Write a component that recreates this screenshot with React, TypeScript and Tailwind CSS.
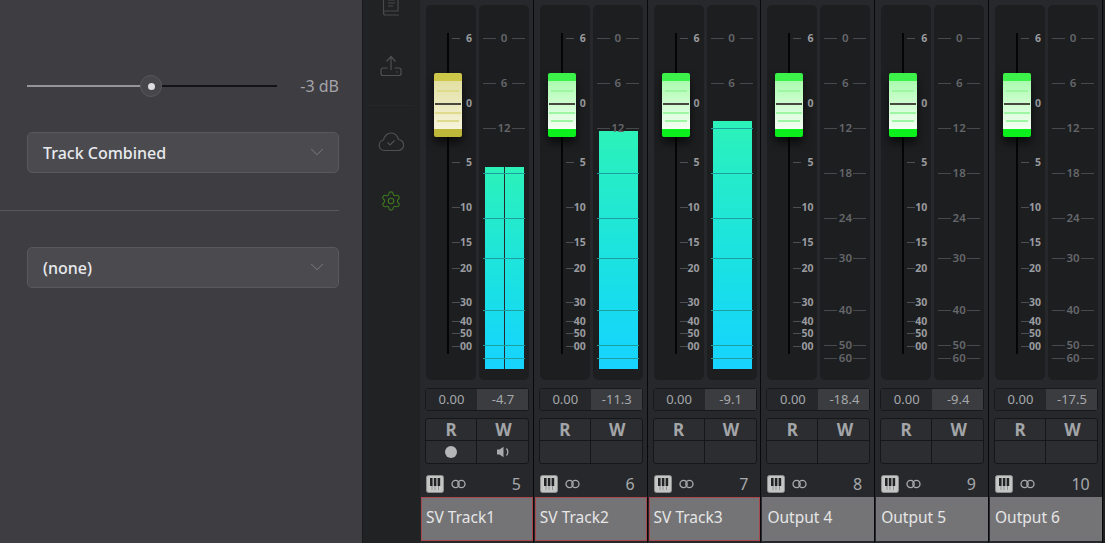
import { ChevronDown, Settings } from 'lucide-react';

const faderScale = [
  { label: '6', y: 38 },
  { label: '0', y: 103, noTick: true },
  { label: '5', y: 162 },
  { label: '10', y: 207 },
  { label: '15', y: 242 },
  { label: '20', y: 268 },
  { label: '30', y: 302 },
  { label: '40', y: 321 },
  { label: '50', y: 333 },
  { label: '00', y: 346 },
];

const meterScale = [
  { label: '0', y: 38 },
  { label: '6', y: 83 },
  { label: '12', y: 128 },
  { label: '18', y: 173 },
  { label: '24', y: 218 },
  { label: '30', y: 258 },
  { label: '40', y: 310 },
  { label: '50', y: 345 },
  { label: '60', y: 358 },
];

const tracks = [
  { name: 'SV Track1', num: 5, peak: '-4.7', level: 167, yellow: true, split: true, armed: true, red: true },
  { name: 'SV Track2', num: 6, peak: '-11.3', level: 131, red: true },
  { name: 'SV Track3', num: 7, peak: '-9.1', level: 121, red: true },
  { name: 'Output 4', num: 8, peak: '-18.4' },
  { name: 'Output 5', num: 9, peak: '-9.4' },
  { name: 'Output 6', num: 10, peak: '-17.5' },
];

function Select({ label }: { label: string }) {
  return (
    <div className="flex h-[41px] w-[312px] items-center justify-between rounded-[5px] border border-[#59585c] bg-[#4b4a4e] pl-[15px] pr-[10px]">
      <span className="text-[16px] font-medium text-[#e8eaee]">{label}</span>
      <ChevronDown size={22} strokeWidth={0.9} className="mb-[2px] text-[#85848a]" />
    </div>
  );
}

function FaderCap({ yellow }: { yellow?: boolean }) {
  const band = yellow ? 'bg-[#cdc74a]' : 'bg-[#3cf24a]';
  const bandLow = yellow ? 'bg-[#bdb73a]' : 'bg-[#0cf01e]';
  const body = yellow ? 'bg-linear-to-b from-[#e2e0a2] to-[#f6f4da]' : 'bg-linear-to-b from-[#aafbae] to-[#f4fff4]';
  const line = yellow ? 'bg-[#dedb8c]' : 'bg-[#9cf6a2]';
  return (
    <div className="absolute left-[8px] top-[68px] flex h-[64px] w-[28px] flex-col overflow-hidden rounded-[2px] shadow-[0_6px_8px_rgba(0,0,0,0.6)]">
      <div className={`h-[8px] ${band}`} />
      <div className={`relative flex-1 ${body}`}>
        <div className={`absolute inset-x-[3px] top-[9px] h-[2px] ${line}`} />
        <div className="absolute inset-x-[1px] top-[22px] h-[2px] bg-[#48483f]" />
        <div className={`absolute inset-x-[1px] top-[31px] h-[2px] ${line}`} />
        <div className={`absolute inset-x-[3px] top-[39px] h-[2px] ${line}`} />
      </div>
      <div className={`h-[8px] ${bandLow}`} />
    </div>
  );
}

function Strip({ track }: { track: (typeof tracks)[number] }) {
  return (
    <div className="flex h-full w-[113.8px] shrink-0 flex-col border-r border-[#08090a] bg-[#26282b]">
      <div className="flex h-[380px] shrink-0 gap-[3px] pl-[6px] pt-[5px]">
        {/* fader */}
        <div className="relative h-full w-[50px] rounded-[5px] bg-[#1d1e20]">
          <div className="absolute left-[21px] top-[28px] h-[321px] w-[2px] bg-[#050505]" />
          {faderScale.map((s) => (
            <div key={s.label} className="absolute left-[26px] flex w-[20px] items-center justify-between" style={{ top: s.y - 12 }}>
              {!s.noTick && <div className="h-[1px] w-[8px] shrink-0 bg-[#4d4f52]" />}
              <span className="ml-auto text-[10.5px] font-bold leading-[14px] text-[#999b9f]">{s.label}</span>
            </div>
          ))}
          <FaderCap yellow={track.yellow} />
        </div>
        {/* meter */}
        <div className="relative h-full w-[50px] rounded-[5px] bg-[#1d1e20]">
          {track.level && (
            <div
              className="absolute left-[6px] w-[39px] bg-linear-to-b from-[#2cf2b9] to-[#17d3ff]"
              style={{ top: track.level - 5, height: 369 - track.level }}
            />
          )}
          {track.split && <div className="absolute left-[25px] top-[162px] h-[202px] w-[1px] bg-[#26282b]" />}
          {meterScale.map((s) => {
            const covered = track.level ? s.y > track.level : false;
            return (
              <div key={s.label} className="absolute inset-x-[4px] flex h-[14px] items-center justify-between" style={{ top: s.y - 12 }}>
                <div className={`h-[1px] w-[13px] ${covered ? 'bg-[#1f9ea0]' : 'bg-[#47494c]'}`} />
                {!covered && <span className="text-[11.5px] font-semibold leading-[14px] text-[#65676b]">{s.label}</span>}
                {covered && <div className="h-[1px] flex-1 bg-[#1f9ea0]" />}
                <div className={`h-[1px] w-[13px] ${covered ? 'bg-[#1f9ea0]' : 'bg-[#47494c]'}`} />
              </div>
            );
          })}
        </div>
      </div>

      {/* values */}
      <div className="ml-[5px] mt-[8px] flex h-[23px] w-[104px] shrink-0 rounded-[3px] border border-[#17181a] text-[13px] text-[#a6a8ab]">
        <div className="flex w-[51px] items-center justify-center bg-[#25272a]">0.00</div>
        <div className="flex flex-1 items-center justify-center bg-[#3a3c3f] pl-[1px]">{track.peak}</div>
      </div>

      {/* read / write */}
      <div className="ml-[5px] mt-[7px] grid h-[46px] w-[104px] shrink-0 grid-cols-[51px_1fr] grid-rows-[22px_1fr] rounded-[3px] border border-[#151618] bg-[#2b2d30] text-[17px] font-bold text-[#a3a5a8]">
        <div className="flex items-center justify-center border-b border-r border-[#151618]">R</div>
        <div className="flex items-center justify-center border-b border-[#151618] pl-[2px]">W</div>
        <div className="flex items-center justify-center border-r border-[#151618]">
          {track.armed && <div className="size-[12px] rounded-full bg-[#b4b6b8]" />}
        </div>
        <div className="flex items-center justify-center">
          {track.armed && (
            <svg width="14" height="12" viewBox="0 0 14 12" fill="none">
              <path d="M1 3.500h2.500L7.500 .8v10.400L3.500 8.500H1z" fill="#a8aaad" />
              <path d="M10.500 2.500c1.500 2 1.500 5 0 7" stroke="#a8aaad" strokeWidth="1.300" />
            </svg>
          )}
        </div>
      </div>

      {/* icons + number */}
      <div className="ml-[6px] mt-[11px] flex h-[18px] shrink-0 items-center pr-[12px]">
        <svg width="18" height="18" viewBox="0 0 18 18">
          <rect x="0.5" y="0.5" width="17" height="17" rx="2" fill="#c4c4c4" stroke="#8e8e8e" />
          <path d="M2.800 3h12.400v12H2.800z" fill="#c9c9c9" />
          <path d="M4 3h2.600v8H4zM7.800 3h2.600v8H7.800zM11.600 3h2.600v8h-2.600z" fill="#222325" />
          <path d="M6 11v4M9 11v4M12.500 11v4" stroke="#77787a" strokeWidth="0.7" />
        </svg>
        <svg width="15" height="10" viewBox="0 0 15 10" fill="none" className="ml-[7px]">
          <circle cx="4.600" cy="5" r="3.600" stroke="#a8aaac" strokeWidth="1.300" />
          <circle cx="10.400" cy="5" r="3.600" stroke="#a8aaac" strokeWidth="1.300" />
        </svg>
        <span className="ml-auto text-[16px] leading-none text-[#a6a8ab]">{track.num}</span>
      </div>

      {/* name */}
      <div
        className={`ml-[1px] mt-[4px] flex h-[44px] shrink-0 items-center border pb-[2px] pl-[4px] text-[15.5px] text-[#e6e6e6] ${
          track.red ? 'border-[#a8474d] bg-[#747476]' : 'border-[#747476] bg-[#747476]'
        }`}
      >
        {track.name}
      </div>
    </div>
  );
}

export default function App() {
  return (
    <div className="flex h-[543px] w-[1105px] overflow-hidden bg-[#1f2022] font-['Noto_Sans',sans-serif]">
      {/* settings panel */}
      <div className="w-[362px] shrink-0 bg-[#3e3d42] pt-[76px]">
        <div className="ml-[27px] flex h-[20px] w-[312px] items-center justify-between">
          <div className="relative flex h-[2px] w-[250px]">
            <div className="w-[124px] bg-[#96959b]" />
            <div className="flex-1 bg-[#141416]" />
            <div className="absolute left-[113px] top-[-10px] flex size-[22px] items-center justify-center rounded-full border border-[#58575c] bg-[#47464b]">
              <div className="size-[7px] rounded-full bg-[#dcdce2]" />
            </div>
          </div>
          <span className="text-[16px] text-[#a4a4aa]">-3 dB</span>
        </div>
        <div className="ml-[27px] mt-[36px]">
          <Select label="Track Combined" />
        </div>
        <div className="mt-[37px] h-[1px] w-[339px] bg-[#58575c]" />
        <div className="ml-[27px] mt-[36px]">
          <Select label="(none)" />
        </div>
      </div>

      {/* icon rail */}
      <div className="flex w-[58px] shrink-0 flex-col border-l border-[#1a1a1c] bg-[#212224]">
        <div className="mr-[2px] flex flex-col items-center">
          <svg width="18" height="21" viewBox="0 0 18 21" fill="none" stroke="#48494b" strokeWidth="1.200" className="mt-[-5px]">
            <path d="M3 1h13v15H3.500A2 2 0 0 0 1.500 18v-15A2 2 0 0 1 3 1z" />
            <path d="M1.500 18a2 2 0 0 0 2 2H17M6 5h7M6 8h7M6 11h5" />
          </svg>
          <svg width="22" height="22" viewBox="0 0 22 22" fill="none" stroke="#4f5052" strokeWidth="1.200" className="mt-[39px]">
            <path d="M11 15V2M6.500 6.500 11 1.500l4.500 5" />
            <path d="M7.500 13H3a2 2 0 0 0-2 2v3.500a2 2 0 0 0 2 2h16a2 2 0 0 0 2-2V15a2 2 0 0 0-2-2h-4.500" />
            <path d="M16 17h1.500" />
          </svg>
          <div className="mt-[28px] h-[1px] w-[46px] bg-[#262729]" />
          <svg width="26" height="20" viewBox="0 0 26 20" fill="none" stroke="#4f5052" strokeWidth="1.200" className="mt-[26px]">
            <path d="M6.500 18.500a5.300 5.300 0 0 1-1-10.500C6.300 4 9.500 1 13 1c3.700 0 6.800 2.800 7.300 6.500a5.500 5.500 0 0 1-.300 11z" />
            <path d="m9.500 10.500 2.500 2.500 4.500-4.500" />
          </svg>
          <Settings size={22} strokeWidth={1.200} className="mt-[38px] text-[#3f7a1f]" />
        </div>
      </div>

      {/* mixer */}
      <div className="flex h-full">
        {tracks.map((t) => (
          <Strip key={t.name} track={t} />
        ))}
      </div>
    </div>
  );
}
